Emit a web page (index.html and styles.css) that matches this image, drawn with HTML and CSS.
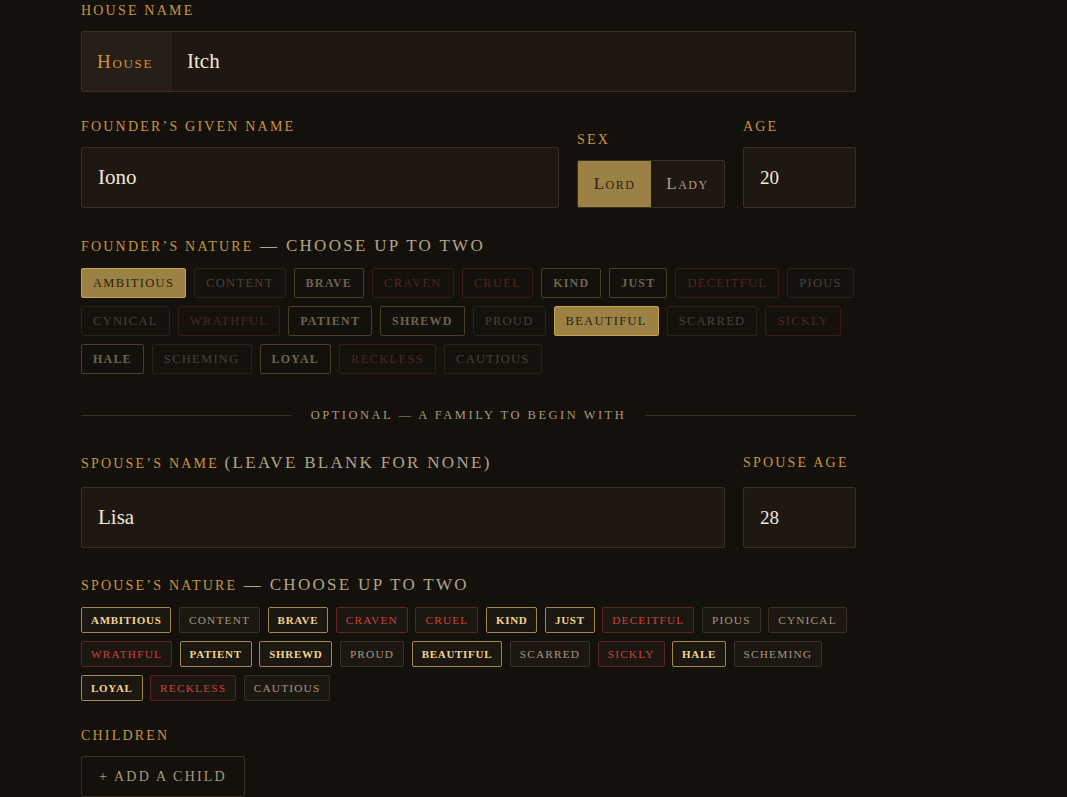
FILE: index.html
```html
<!DOCTYPE html>
<html>
<head>
<meta charset="utf-8">
<link rel="stylesheet" href="styles.css">
</head>
<body>
<main class="form">
  <section class="field house-field">
    <div class="label">House Name</div>
    <div class="input house-input">
      <span class="prefix">House</span>
      <span class="value">Itch</span>
    </div>
  </section>

  <section class="founder-row">
    <div class="field">
      <div class="label">Founder’s Given Name</div>
      <div class="input"><span class="value">Iono</span></div>
    </div>
    <div class="field">
      <div class="label">Sex</div>
      <div class="toggle">
        <span class="opt on">Lord</span>
        <span class="opt">Lady</span>
      </div>
    </div>
    <div class="field">
      <div class="label">Age</div>
      <div class="input"><span class="value num">20</span></div>
    </div>
  </section>

  <section class="nature founder-nature">
    <div class="heading"><span class="label-inline">Founder’s Nature</span><span class="sub"> — Choose up to two</span></div>
    <div class="chips big">
      <span class="chip sel">Ambitious</span>
      <span class="chip neu">Content</span>
      <span class="chip pos">Brave</span>
      <span class="chip neg">Craven</span>
      <span class="chip neg">Cruel</span>
      <span class="chip pos">Kind</span>
      <span class="chip pos">Just</span>
      <span class="chip neg">Deceitful</span>
      <span class="chip neu">Pious</span>
      <span class="chip neu">Cynical</span>
      <span class="chip neg">Wrathful</span>
      <span class="chip pos">Patient</span>
      <span class="chip pos">Shrewd</span>
      <span class="chip neu">Proud</span>
      <span class="chip sel">Beautiful</span>
      <span class="chip neu">Scarred</span>
      <span class="chip neg">Sickly</span>
      <span class="chip pos">Hale</span>
      <span class="chip neu">Scheming</span>
      <span class="chip pos">Loyal</span>
      <span class="chip neg">Reckless</span>
      <span class="chip neu">Cautious</span>
    </div>
  </section>

  <div class="divider"><span class="line"></span><span class="divider-text">Optional — a family to begin with</span><span class="line"></span></div>

  <section class="spouse-row">
    <div class="field">
      <div class="label">Spouse’s Name <span class="sub">(leave blank for none)</span></div>
      <div class="input"><span class="value">Lisa</span></div>
    </div>
    <div class="field">
      <div class="label">Spouse Age</div>
      <div class="input"><span class="value num">28</span></div>
    </div>
  </section>

  <section class="nature spouse-nature">
    <div class="heading"><span class="label-inline">Spouse’s Nature</span><span class="sub"> — Choose up to two</span></div>
    <div class="chips small">
      <span class="chip pos">Ambitious</span>
      <span class="chip neu">Content</span>
      <span class="chip pos">Brave</span>
      <span class="chip neg">Craven</span>
      <span class="chip neg">Cruel</span>
      <span class="chip pos">Kind</span>
      <span class="chip pos">Just</span>
      <span class="chip neg">Deceitful</span>
      <span class="chip neu">Pious</span>
      <span class="chip neu">Cynical</span>
      <span class="chip neg">Wrathful</span>
      <span class="chip pos">Patient</span>
      <span class="chip pos">Shrewd</span>
      <span class="chip neu">Proud</span>
      <span class="chip pos">Beautiful</span>
      <span class="chip neu">Scarred</span>
      <span class="chip neg">Sickly</span>
      <span class="chip pos">Hale</span>
      <span class="chip neu">Scheming</span>
      <span class="chip pos">Loyal</span>
      <span class="chip neg">Reckless</span>
      <span class="chip neu">Cautious</span>
    </div>
  </section>

  <section class="children">
    <div class="label">Children</div>
    <button class="add-btn">+ Add a child</button>
  </section>
</main>
</body>
</html>
```

FILE: styles.css
```css
html, body {
  margin: 0;
  padding: 0;
  background: #14110d;
  height: 100%;
  overflow: hidden;
}

body {
  font-family: "Liberation Serif", "DejaVu Serif", serif;
  color: #efe4d2;
}

.form {
  width: 775px;
  margin-left: 81px;
  padding-top: 2px;
}

.label, .label-inline {
  font-size: 14px;
  line-height: 18px;
  letter-spacing: 2.2px;
  text-transform: uppercase;
  color: #c8953c;
}

.label {
  height: 18px;
  margin-bottom: 11px;
  white-space: nowrap;
}

.sub {
  font-size: 17px;
  line-height: 18px;
  letter-spacing: 2.3px;
  color: #b3a486;
  text-transform: uppercase;
}

.input {
  height: 59px;
  border: 1px solid #3a2f22;
  border-radius: 2px;
  background: #1e1712;
  display: flex;
  align-items: center;
}

.value {
  font-size: 21px;
  padding-left: 16px;
  color: #f1e7d7;
}

.value.num {
  font-size: 19px;
}

.house-input .value {
  padding-left: 15px;
}

.house-input .prefix {
  align-self: stretch;
  display: flex;
  align-items: center;
  width: 90px;
  box-sizing: border-box;
  padding-left: 15px;
  background: #261e17;
  font-variant: small-caps;
  font-size: 19px;
  letter-spacing: 1.7px;
  color: #c8953c;
}

.house-field {
  margin-bottom: 26px;
}

.founder-row {
  display: grid;
  grid-template-columns: 1fr 148px 113px;
  column-gap: 18px;
  align-items: end;
  margin-bottom: 27px;
}

.toggle {
  display: flex;
  height: 46px;
  border: 1px solid #3a2f22;
  border-radius: 2px;
  overflow: hidden;
  background: #1e1712;
}

.toggle .opt {
  flex: 1;
  display: flex;
  align-items: center;
  justify-content: center;
  font-variant: small-caps;
  font-size: 17px;
  letter-spacing: 1.5px;
  color: #b19f7c;
}

.toggle .opt.on {
  background: #9b8143;
  color: #2b2216;
}

.heading {
  height: 22px;
  line-height: 22px;
  margin-bottom: 11px;
  white-space: nowrap;
}

.chips {
  display: flex;
  flex-wrap: wrap;
}

.chip {
  display: inline-flex;
  align-items: center;
  border: 1px solid;
  border-radius: 2px;
  text-transform: uppercase;
  box-sizing: border-box;
  white-space: nowrap;
}

.chips.big {
  gap: 8px 8px;
}

.chips.big .chip {
  height: 30px;
  padding: 0 11px;
  font-size: 12.5px;
  letter-spacing: 1.3px;
}

.chips.big .chip.pos {
  font-size: 12px;
  letter-spacing: 1.2px;
}

.chips.small {
  gap: 8px 7.5px;
}

.chips.small .chip {
  height: 26px;
  padding: 0 9px;
  font-size: 11.3px;
  letter-spacing: 1.2px;
  background: #1d1712;
}

.chips.small .chip.pos {
  font-size: 11px;
  letter-spacing: 0.7px;
}

.chip.pos { font-weight: 700; }

/* founder (disabled / dim) */
.chips.big .chip.neu { border-color: #27211a; color: #4a4237; }
.chips.big .chip.pos { border-color: #4d3f25; color: #6f6450; }
.chips.big .chip.neg { border-color: #361b16; color: #4f2720; }
.chips.big .chip.sel {
  background: #9b8143;
  border-color: #c9a04b;
  color: #2b2216;
}

/* spouse (active) */
.chips.small .chip.neu { border-color: #3a3026; color: #a59780; }
.chips.small .chip.pos { border-color: #a2874c; color: #f0d58f; }
.chips.small .chip.neg { border-color: #5b241e; color: #c94438; }

.founder-nature {
  margin-bottom: 34px;
}

.divider {
  display: flex;
  align-items: center;
  gap: 19px;
  margin-bottom: 32px;
}

.divider .line {
  flex: 1;
  height: 1px;
  background: #3a2f22;
}

.divider-text {
  font-size: 12.5px;
  line-height: 14px;
  letter-spacing: 2.5px;
  text-transform: uppercase;
  color: #a89977;
}

.spouse-row {
  display: grid;
  grid-template-columns: 1fr 113px;
  column-gap: 18px;
  align-items: end;
  margin-bottom: 26px;
}

.spouse-row .label {
  margin-bottom: 15px;
}

.spouse-nature {
  margin-bottom: 26px;
}

.add-btn {
  display: block;
  font-family: "Liberation Serif", "DejaVu Serif", serif;
  height: 41px;
  padding: 0 17px;
  background: transparent;
  border: 1px solid #3a2f22;
  border-radius: 2px;
  color: #a89977;
  font-size: 14px;
  letter-spacing: 2.2px;
  text-transform: uppercase;
  margin-top: 4px;
}
```
